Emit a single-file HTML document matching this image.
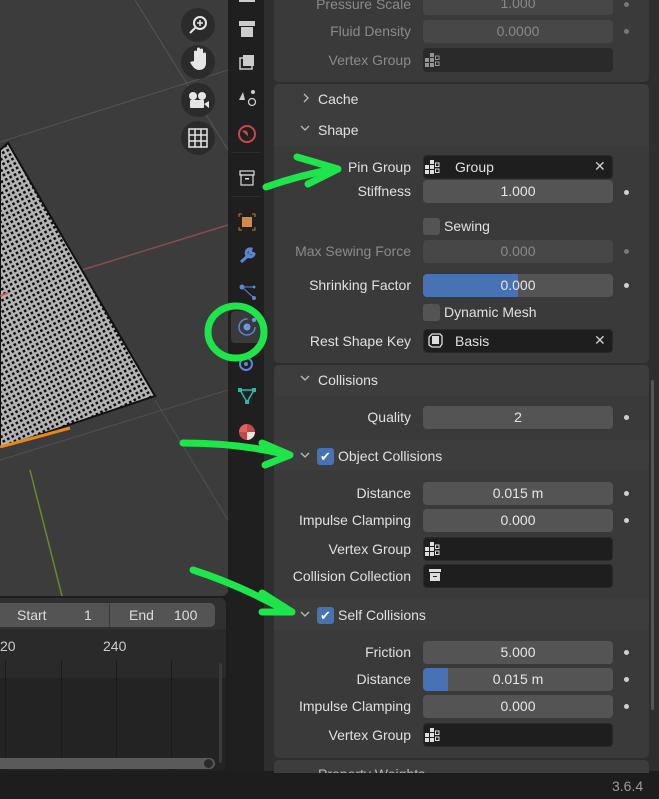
<!DOCTYPE html>
<html><head><meta charset="utf-8"><style>
*{margin:0;padding:0;box-sizing:border-box}
body{width:659px;height:799px;overflow:hidden;background:#1d1d1d;font-family:"Liberation Sans",sans-serif;font-size:14px;color:#e0e0e0;position:relative}
.a{position:absolute}
.lbl{position:absolute;right:248px;text-align:right;white-space:nowrap}
.dim{color:#8a8a8a}
.num{position:absolute;left:423px;width:190px;height:23px;background:#545454;border-radius:4px;text-align:center;line-height:23px;color:#e6e6e6}
.txt{position:absolute;left:423px;width:190px;height:24px;background:#1e1e1e;border-radius:4px;border:1px solid #2a2a2a}
.dot{position:absolute;left:624px;width:5px;height:5px;border-radius:50%;background:#d0d0d0}
.cb{position:absolute;width:17px;height:17px;border-radius:3px;background:#545454}
.cbon{background:#4772b3}
.hdr{position:absolute;left:274px;width:375px;height:31px;background:#3d3d3d}
</style></head><body>
<!-- viewport -->
<div class="a" style="left:0;top:0;width:228px;height:596px;background:#3c3c3c;overflow:hidden;border-radius:0 0 6px 0">
<svg width="228" height="596" class="a" style="left:0;top:0">
<defs><pattern id="ck" width="5" height="5" patternUnits="userSpaceOnUse" patternTransform="rotate(-28)"><rect width="5" height="5" fill="#b4b4b4"/><rect width="2.6" height="2.6" fill="#0c0c0c"/></pattern></defs>
<line x1="0" y1="142" x2="228" y2="70" stroke="#555" stroke-width="1"/>
<line x1="135" y1="0" x2="228" y2="150" stroke="#555" stroke-width="1"/>
<line x1="0" y1="460" x2="228" y2="390" stroke="#505050" stroke-width="1"/>
<line x1="155" y1="400" x2="228" y2="520" stroke="#505050" stroke-width="1"/>
<line x1="82" y1="270" x2="228" y2="225" stroke="#8a4a52" stroke-width="1.5"/>
<line x1="30" y1="470" x2="62" y2="596" stroke="#6a8a2a" stroke-width="1.5"/>
<polygon points="0,150 8,143 155,396 0,448" fill="url(#ck)" stroke="#111" stroke-width="2"/>
<line x1="0" y1="447" x2="70" y2="428" stroke="#e8861c" stroke-width="3"/>
<line x1="0" y1="296" x2="8" y2="293" stroke="#e05060" stroke-width="2"/>
<g fill="#2b2b2b"><circle cx="198" cy="25" r="17"/><circle cx="198" cy="62" r="17"/><circle cx="198" cy="100" r="17"/><circle cx="198" cy="138" r="17"/></g>
<g stroke="#e6e6e6" fill="none" stroke-width="2"><circle cx="200" cy="23" r="6"/><line x1="195" y1="28" x2="190" y2="33"/><line x1="200" y1="20" x2="200" y2="26" stroke-width="1.5"/><line x1="197" y1="23" x2="203" y2="23" stroke-width="1.5"/></g>
<path d="M190 62 l4 -1 v-9 a1.5 1.5 0 0 1 3 0 v7 v-10 a1.5 1.5 0 0 1 3 0 v10 v-9 a1.5 1.5 0 0 1 3 0 v10 v-6 a1.5 1.5 0 0 1 3 0 v10 q-1 6 -7 6 q-5 0 -9 -8z" fill="#e6e6e6"/>
<g fill="#e6e6e6"><circle cx="193" cy="96" r="4"/><circle cx="202" cy="96" r="4"/><rect x="190" y="100" width="14" height="8" rx="1"/><polygon points="204,104 209,101 209,108"/></g>
<g stroke="#e6e6e6" stroke-width="1.5" fill="none"><rect x="189" y="129" width="18" height="18"/><line x1="195" y1="129" x2="195" y2="147"/><line x1="201" y1="129" x2="201" y2="147"/><line x1="189" y1="135" x2="207" y2="135"/><line x1="189" y1="141" x2="207" y2="141"/></g>
</svg></div>
<!-- timeline -->
<div class="a" style="left:0;top:598px;width:226px;height:173px;background:#232323;border-radius:0 6px 6px 0;overflow:hidden">
<div class="a" style="left:0;top:0;width:226px;height:32px;background:#303030"></div>
<div class="a" style="left:0;top:5px;width:215px;height:24px;background:#545454;border-radius:0 5px 5px 0"></div>
<div class="a" style="left:109px;top:5px;width:1px;height:24px;background:#3a3a3a"></div>
<div class="a" style="left:17px;top:9px;color:#ddd">Start</div><div class="a" style="left:84px;top:9px;color:#ddd">1</div>
<div class="a" style="left:129px;top:9px;color:#ddd">End</div><div class="a" style="left:174px;top:9px;color:#ddd">100</div>
<div class="a" style="left:0;top:32px;width:226px;height:48px;background:#2a2a2a"></div>
<div class="a" style="left:0;top:40px;color:#ccc">20</div><div class="a" style="left:103px;top:40px;color:#ccc">240</div>
<div class="a" style="left:5px;top:62px;width:1px;height:110px;background:#1a1a1a"></div>
<div class="a" style="left:61px;top:62px;width:1px;height:110px;background:#1a1a1a"></div>
<div class="a" style="left:116px;top:62px;width:1px;height:110px;background:#1a1a1a"></div>
<div class="a" style="left:171px;top:62px;width:1px;height:110px;background:#1a1a1a"></div>
<div class="a" style="left:219px;top:65px;width:3px;height:100px;background:#3a3a3a;border-radius:2px"></div>
<div class="a" style="left:0;top:160px;width:215px;height:11px;background:#5a5a5a;border-radius:0 6px 6px 0"></div>
<div class="a" style="left:204px;top:161px;width:9px;height:9px;background:#2a2a2a;border-radius:50%"></div>
</div>
<!-- tab bar -->
<div class="a" style="left:228px;top:0;width:36px;height:771px;background:#1f1f1f"></div>
<div class="a" style="left:231px;top:152px;width:30px;height:1px;background:#2d2d2d"></div>
<div class="a" style="left:231px;top:196px;width:30px;height:1px;background:#2d2d2d"></div>
<div class="a" style="left:231px;top:311px;width:30px;height:32px;background:#3a3a3a;border-radius:4px"></div>
<svg class="a" style="left:228px;top:0" width="36" height="450">
<rect x="11" y="-4" width="16" height="6" fill="#ccc"/>
<rect x="11" y="21" width="16" height="5" fill="#ccc"/><rect x="13" y="27" width="12" height="10" fill="#ccc"/>
<rect x="12" y="58" width="12" height="11" fill="none" stroke="#ccc" stroke-width="1.5"/><rect x="15" y="55" width="11" height="11" fill="#ccc"/>
<path d="M15 92 l-4 8 h6z" fill="#ccc"/><circle cx="24" cy="102" r="3.5" fill="none" stroke="#ccc" stroke-width="1.3"/><circle cx="25" cy="92" r="2" fill="#ccc"/>
<circle cx="19" cy="134" r="8" fill="none" stroke="#c24a4a" stroke-width="2"/><path d="M14 131 q4 -2 6 2 q-1 4 3 6" fill="#c24a4a"/>
<rect x="12" y="171" width="14" height="4" fill="none" stroke="#ddd" stroke-width="1.2"/><rect x="13" y="175" width="12" height="10" fill="none" stroke="#ddd" stroke-width="1.2"/><rect x="17" y="178" width="4" height="1.5" fill="#ddd"/>
<rect x="14" y="217" width="10" height="10" fill="#d18a4a"/><path d="M11 217v-3h3M24 214h3v3M27 227v3h-3M14 230h-3v-3" stroke="#c07a3a" fill="none"/>
<path d="M23 249 a4 4 0 1 0 3 5 l-2 -1 -2 -1 z M22 254 l-9 8" stroke="#5a86d6" stroke-width="3" fill="none"/>
<circle cx="14" cy="287" r="2.5" fill="#5a86d6"/><circle cx="26" cy="287" r="1.5" fill="#5a86d6"/><circle cx="26" cy="298" r="2" fill="#5a86d6"/><path d="M14 287h12M14 287l12 11" stroke="#5a86d6"/>
<circle cx="19" cy="327" r="8" fill="none" stroke="#5a86d6" stroke-width="1.5" stroke-dasharray="38 12"/><circle cx="19" cy="327" r="3.5" fill="#6a9aee"/><circle cx="26" cy="320" r="2" fill="#6a9aee"/>
<circle cx="18" cy="364" r="6" fill="none" stroke="#5a86d6" stroke-width="2"/><circle cx="18" cy="364" r="2" fill="#5a86d6"/>
<path d="M12 390h14l-7 12z" fill="none" stroke="#2ab9a9" stroke-width="1.5"/><g fill="#2ab9a9"><rect x="10" y="388" width="4" height="4"/><rect x="24" y="388" width="4" height="4"/><rect x="17" y="400" width="4" height="4"/></g>
<circle cx="19" cy="432" r="8" fill="#c04a4a"/><path d="M19 432h8a8 8 0 0 1 -8 8z" fill="#f0e0e0"/><path d="M19 432v-8a8 8 0 0 0 -8 8z" fill="#e06060"/>
</svg>
<!-- properties -->
<div class="a" style="left:264px;top:0;width:395px;height:771px;background:#2e2e2e"></div>
<div class="a" style="left:274px;top:0;width:375px;height:82px;background:#3a3a3a;border-radius:0 0 5px 5px"></div>
<div class="a" style="left:274px;top:84px;width:375px;height:279px;background:#3a3a3a;border-radius:5px"></div>
<div class="hdr" style="top:84px;border-radius:5px 5px 0 0;background:#3d3d3d"></div>
<div class="hdr" style="top:115px"></div>
<div class="a" style="left:274px;top:365px;width:375px;height:393px;background:#3a3a3a;border-radius:5px"></div>
<div class="hdr" style="top:365px;border-radius:5px 5px 0 0"></div>
<div class="hdr" style="top:440px;height:30px"></div>
<div class="hdr" style="top:599px;height:31px"></div>
<div class="a" style="left:274px;top:760px;width:375px;height:20px;background:#3d3d3d;border-radius:5px"></div>
<div class="a" style="left:651px;top:380px;width:3px;height:330px;background:#555;border-radius:2px"></div>

<div class="lbl dim" style="top:-4px">Pressure Scale</div><div class="num" style="top:-8px;background:#474747;color:#888">1.000</div><div class="dot" style="top:2px;background:#777"></div>
<div class="lbl dim" style="top:23px">Fluid Density</div><div class="num" style="top:20px;background:#474747;color:#888">0.0000</div><div class="dot" style="top:29px;background:#777"></div>
<div class="lbl dim" style="top:52px">Vertex Group</div><div class="txt" style="top:48px;background:#2a2a2a"></div>

<svg class="a" style="left:296px;top:90px" width="20" height="380" fill="none" stroke="#bbb" stroke-width="1.3">
<path d="M8 4 l4 4 -4 4"/>
<path d="M5 36 l4 4 4 -4"/>
<path d="M5 286 l4 4 4 -4"/>
</svg>
<svg class="a" style="left:296px;top:450px" width="20" height="180" fill="none" stroke="#bbb" stroke-width="1.3">
<path d="M5 3 l4 4 4 -4"/>
<path d="M5 162 l4 4 4 -4"/>
</svg>
<div class="a" style="left:318px;top:91px">Cache</div>
<div class="a" style="left:318px;top:122px">Shape</div>

<div class="lbl" style="top:159px">Pin Group</div><div class="txt" style="top:155px"></div><div class="a" style="left:455px;top:159px">Group</div><div class="a" style="left:594px;top:158px;color:#ccc">✕</div>
<div class="lbl" style="top:183px">Stiffness</div><div class="num" style="top:180px">1.000</div><div class="dot" style="top:190px"></div>
<div class="cb" style="left:423px;top:218px"></div><div class="a" style="left:444px;top:218px">Sewing</div>
<div class="lbl dim" style="top:243px">Max Sewing Force</div><div class="num" style="top:240px;background:#474747;color:#888">0.000</div><div class="dot" style="top:249px;background:#777"></div>
<div class="lbl" style="top:277px">Shrinking Factor</div><div class="num" style="top:274px;background:linear-gradient(90deg,#4772b3 0,#4772b3 50%,#545454 50%)">0.000</div><div class="dot" style="top:283px"></div>
<div class="cb" style="left:423px;top:304px"></div><div class="a" style="left:444px;top:304px">Dynamic Mesh</div>
<div class="lbl" style="top:333px">Rest Shape Key</div><div class="txt" style="top:329px"></div><div class="a" style="left:455px;top:333px">Basis</div><div class="a" style="left:594px;top:332px;color:#ccc">✕</div>

<div class="a" style="left:318px;top:372px">Collisions</div>
<div class="lbl" style="top:409px">Quality</div><div class="num" style="top:406px">2</div><div class="dot" style="top:415px"></div>
<div class="cb cbon" style="left:317px;top:448px;color:#fff;font-size:13px;text-align:center;line-height:17px">✔</div><div class="a" style="left:338px;top:448px">Object Collisions</div>
<div class="lbl" style="top:485px">Distance</div><div class="num" style="top:482px">0.015 m</div><div class="dot" style="top:491px"></div>
<div class="lbl" style="top:512px">Impulse Clamping</div><div class="num" style="top:509px">0.000</div><div class="dot" style="top:518px"></div>
<div class="lbl" style="top:541px">Vertex Group</div><div class="txt" style="top:537px"></div>
<div class="lbl" style="top:568px">Collision Collection</div><div class="txt" style="top:564px"></div>
<div class="cb cbon" style="left:317px;top:607px;color:#fff;font-size:13px;text-align:center;line-height:17px">✔</div><div class="a" style="left:338px;top:607px">Self Collisions</div>
<div class="lbl" style="top:644px">Friction</div><div class="num" style="top:641px">5.000</div><div class="dot" style="top:650px"></div>
<div class="lbl" style="top:671px">Distance</div><div class="num" style="top:668px;background:linear-gradient(90deg,#4772b3 0,#4772b3 25px,#545454 25px)">0.015 m</div><div class="dot" style="top:677px"></div>
<div class="lbl" style="top:698px">Impulse Clamping</div><div class="num" style="top:695px">0.000</div><div class="dot" style="top:704px"></div>
<div class="lbl" style="top:727px">Vertex Group</div><div class="txt" style="top:723px"></div>
<div class="a" style="left:318px;top:766px;color:#bbb">Property Weights</div>

<svg class="a" style="left:423px;top:0" width="30" height="760" fill="#ddd">
<defs><g id="vg"><rect x="7" y="0" width="4" height="4"/><rect x="7" y="5" width="4" height="4"/><rect x="7" y="10" width="4" height="4"/><rect x="2" y="5" width="4" height="4"/><rect x="2" y="10" width="4" height="4"/><rect x="12.5" y="3" width="3.5" height="3.5" fill="none" stroke="#ddd" stroke-width="1"/><rect x="12.5" y="9" width="3.5" height="3.5" fill="none" stroke="#ddd" stroke-width="1"/></g></defs>
<use href="#vg" y="53" opacity="0.6"/><use href="#vg" y="160"/><use href="#vg" y="542"/><use href="#vg" y="728"/>
<path d="M9 334h8l2 2v8l-2 3h-8l-3-2v-8z" fill="none" stroke="#ddd" stroke-width="1.3"/><rect x="9" y="336" width="7" height="8"/>
<rect x="6" y="569" width="12" height="3"/><rect x="7" y="573" width="10" height="8"/><rect x="10" y="576" width="4" height="1" fill="#1e1e1e"/>
</svg>

<div class="a" style="left:0;top:773px;width:659px;height:26px;background:#1d1d1d"></div>
<div class="a" style="left:612px;top:778px;color:#9a9a9a">3.6.4</div>

<!-- annotations -->
<svg class="a" style="left:0;top:0" width="659" height="799" fill="none" stroke="#1ee64a" stroke-width="7" stroke-linecap="round" stroke-linejoin="round">
<path d="M266 187 Q300 175 335 169"/><path d="M297 157 L338 169 L308 184"/>
<ellipse cx="236" cy="332" rx="28" ry="26"/>
<path d="M183 443 Q240 443 288 455"/><path d="M262 443 L290 455 L265 465"/>
<path d="M193 570 Q240 585 288 612"/><path d="M262 593 L292 612 L262 612"/>
</svg>
</body></html>
